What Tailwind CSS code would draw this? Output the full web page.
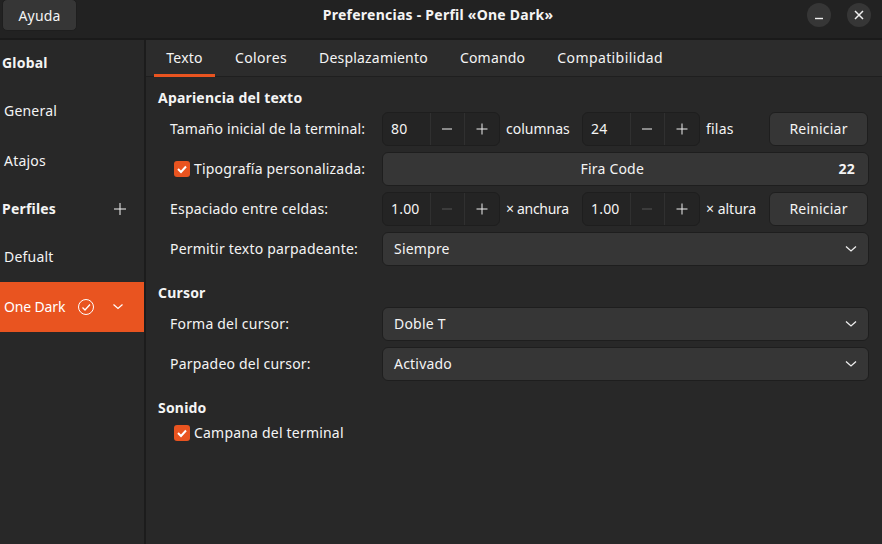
<!DOCTYPE html>
<html><head><meta charset="utf-8"><script src="https://cdn.jsdelivr.net/npm/@tailwindcss/browser@4"></script></head>
<body class="bg-[#282828]">
<div class="w-[882px] h-[544px] overflow-hidden flex flex-col bg-[#282828] text-[#f4f4f4] text-[14px] tracking-[0.2px] font-['Noto_Sans','Open_Sans',sans-serif]">
  <header class="h-[40px] shrink-0 relative flex items-center justify-between bg-[#222222] border-b-2 border-[#1a1a1a] pl-[2px] pr-[11px]">
    <button class="h-[32px] w-[75px] -mt-[8px] rounded-[5px] bg-[#363636] border border-[#1e1e1e] flex items-center justify-center text-[14px]">Ayuda</button>
    <div class="absolute left-0 right-0 top-[5px] pr-[6px] text-center font-bold text-[14px] leading-[20px] tracking-[0.25px]">Preferencias - Perfil «One Dark»</div>
    <div class="flex gap-[16px] -mt-[8px]">
      <div class="w-[24px] h-[24px] rounded-full bg-[#363636] flex items-center justify-center"><svg width="16" height="16" viewBox="0 0 16 16"><path d="M4 11.5h8" stroke="#f0f0f0" stroke-width="1.4"/></svg></div>
      <div class="w-[24px] h-[24px] rounded-full bg-[#363636] flex items-center justify-center"><svg width="16" height="16" viewBox="0 0 16 16"><path d="M4 4l8 8M12 4l-8 8" stroke="#f0f0f0" stroke-width="1.5"/></svg></div>
    </div>
  </header>
  <div class="flex flex-1 min-h-0">
    <aside class="w-[146px] shrink-0 border-r-2 border-[#1c1c1c] flex flex-col">
      <div class="h-[46px] flex items-center pl-[2px] pb-[2px] font-bold">Global</div>
      <div class="h-[50px] flex items-center pl-[4px] pb-[2px]">General</div>
      <div class="h-[50px] flex items-center pl-[4px] pb-[2px]">Atajos</div>
      <div class="h-[46px] flex items-center justify-between pl-[2px] pr-[18px] pb-[2px] font-bold">Perfiles
        <svg class="mt-[2px]" width="12" height="12" viewBox="0 0 12 12"><path d="M6 0v12M0 6h12" stroke="#f4f4f4" stroke-width="1"/></svg></div>
      <div class="h-[50px] flex items-center pl-[4px] pb-[2px]">Defualt</div>
      <div class="h-[50px] flex items-center pl-[4px] pb-[2px] bg-[#e95420] text-white"><span class="tracking-[-0.15px]">One Dark</span>
        <svg class="ml-[12px] mt-[1px]" width="18" height="18" viewBox="0 0 18 18" fill="none" stroke="#fff" stroke-width="1"><circle cx="9" cy="9" r="7.5"/><path d="M5.5 9.5l2.5 2.5 5-5.5" stroke-width="1.3"/></svg>
        <svg class="ml-[17px] mt-[1px]" width="12" height="8" viewBox="0 0 12 8" fill="none" stroke="#fff" stroke-width="1.2"><path d="M1.5 1.5L6 5.5l4.5-4"/></svg></div>
    </aside>
    <main class="flex-1 min-w-0 flex flex-col">
      <nav class="h-[37px] shrink-0 bg-[#2c2c2c] border-b border-[#1f1f1f] flex pl-[8px]">
        <div class="h-[37px] w-[61px] flex items-center justify-center border-b-[3px] border-[#e95420]">Texto</div>
        <div class="h-[36px] ml-[20px] pb-[1px] flex items-center tracking-[0.35px]">Colores</div>
        <div class="h-[36px] ml-[32px] pb-[1px] flex items-center">Desplazamiento</div>
        <div class="h-[36px] ml-[32px] pb-[1px] flex items-center">Comando</div>
        <div class="h-[36px] ml-[32px] pb-[1px] flex items-center tracking-[0.4px]">Compatibilidad</div>
      </nav>
      <div class="pl-[12px] pr-[13px] pt-[11px] flex flex-col">
        <h3 class="h-[20px] leading-[20px] font-bold">Apariencia del texto</h3>
        <div class="mt-[4px] flex flex-col gap-[6px]">
          <div class="h-[34px] flex items-center">
            <span class="w-[224px] pl-[12px] pb-[2px] shrink-0 tracking-[0.1px]">Tamaño inicial de la terminal:</span>
            <div class="w-[118px] h-[34px] rounded-[6px] border border-[#1e1e1e] bg-[#242424] flex items-center shrink-0">
              <span class="w-[47px] pl-[8px] pb-[2px]">80</span>
              <span class="w-[35px] h-full border-l border-[#303030] flex items-center justify-center"><svg width="12" height="12" viewBox="0 0 12 12"><path d="M1 6h10" stroke="#eee"/></svg></span>
              <span class="w-[35px] h-full border-l border-[#303030] flex items-center justify-center"><svg width="12" height="12" viewBox="0 0 12 12"><path d="M0.5 6h11M6 .5v11" stroke="#eee"/></svg></span>
            </div>
            <span class="w-[82px] pl-[6px] pb-[2px] shrink-0 tracking-normal">columnas</span>
            <div class="w-[118px] h-[34px] rounded-[6px] border border-[#1e1e1e] bg-[#242424] flex items-center shrink-0">
              <span class="w-[47px] pl-[8px] pb-[2px]">24</span>
              <span class="w-[35px] h-full border-l border-[#303030] flex items-center justify-center"><svg width="12" height="12" viewBox="0 0 12 12"><path d="M1 6h10" stroke="#eee"/></svg></span>
              <span class="w-[35px] h-full border-l border-[#303030] flex items-center justify-center"><svg width="12" height="12" viewBox="0 0 12 12"><path d="M0.5 6h11M6 .5v11" stroke="#eee"/></svg></span>
            </div>
            <span class="w-[69px] pl-[6px] pb-[2px] shrink-0">filas</span>
            <button class="w-[99px] h-[34px] rounded-[6px] border border-[#1e1e1e] bg-[#363636] text-center pb-[2px]">Reiniciar</button>
          </div>
          <div class="h-[34px] flex items-center">
            <label class="w-[224px] pl-[16px] shrink-0 flex items-center gap-[4px]">
              <span class="w-[16px] h-[16px] rounded-[3px] bg-[#e95420] flex items-center justify-center"><svg width="12" height="12" viewBox="0 0 12 12" fill="none" stroke="#fff" stroke-width="2"><path d="M2 6l3 3 5-5.5"/></svg></span><span class="pb-[2px]">Tipografía personalizada:</span></label>
            <button class="flex-1 h-[34px] rounded-[6px] border border-[#1e1e1e] bg-[#363636] flex items-center pl-[3px] pr-[13px] pb-[2px]"><span class="flex-1 text-center">Fira Code</span><span class="font-bold">22</span></button>
          </div>
          <div class="h-[34px] flex items-center">
            <span class="w-[224px] pl-[12px] pb-[2px] shrink-0">Espaciado entre celdas:</span>
            <div class="w-[118px] h-[34px] rounded-[6px] border border-[#1e1e1e] bg-[#242424] flex items-center shrink-0">
              <span class="w-[47px] pl-[8px] pb-[2px]">1.00</span>
              <span class="w-[35px] h-full border-l border-[#303030] flex items-center justify-center"><svg width="12" height="12" viewBox="0 0 12 12"><path d="M1 6h10" stroke="#555"/></svg></span>
              <span class="w-[35px] h-full border-l border-[#303030] flex items-center justify-center"><svg width="12" height="12" viewBox="0 0 12 12"><path d="M0.5 6h11M6 .5v11" stroke="#eee"/></svg></span>
            </div>
            <span class="w-[82px] pl-[6px] pb-[2px] shrink-0 tracking-[-0.3px]">× anchura</span>
            <div class="w-[118px] h-[34px] rounded-[6px] border border-[#1e1e1e] bg-[#242424] flex items-center shrink-0">
              <span class="w-[47px] pl-[8px] pb-[2px]">1.00</span>
              <span class="w-[35px] h-full border-l border-[#303030] flex items-center justify-center"><svg width="12" height="12" viewBox="0 0 12 12"><path d="M1 6h10" stroke="#555"/></svg></span>
              <span class="w-[35px] h-full border-l border-[#303030] flex items-center justify-center"><svg width="12" height="12" viewBox="0 0 12 12"><path d="M0.5 6h11M6 .5v11" stroke="#eee"/></svg></span>
            </div>
            <span class="w-[69px] pl-[6px] pb-[2px] shrink-0 tracking-normal">× altura</span>
            <button class="w-[99px] h-[34px] rounded-[6px] border border-[#1e1e1e] bg-[#363636] text-center pb-[2px]">Reiniciar</button>
          </div>
          <div class="h-[34px] flex items-center">
            <span class="w-[224px] pl-[12px] pb-[2px] shrink-0">Permitir texto parpadeante:</span>
            <div class="flex-1 h-[34px] rounded-[6px] border border-[#1e1e1e] bg-[#363636] flex items-center justify-between pl-[11px] pr-[11px]"><span class="pb-[2px]">Siempre</span><svg width="12" height="8" viewBox="0 0 12 8" fill="none" stroke="#eee" stroke-width="1.3"><path d="M1 1.5L6 6l5-4.5"/></svg></div>
          </div>
        </div>
        <h3 class="mt-[17px] h-[20px] leading-[20px] font-bold">Cursor</h3>
        <div class="mt-[4px] flex flex-col gap-[6px]">
          <div class="h-[34px] flex items-center">
            <span class="w-[224px] pl-[12px] pb-[2px] shrink-0">Forma del cursor:</span>
            <div class="flex-1 h-[34px] rounded-[6px] border border-[#1e1e1e] bg-[#363636] flex items-center justify-between pl-[11px] pr-[11px]"><span class="pb-[2px]">Doble T</span><svg width="12" height="8" viewBox="0 0 12 8" fill="none" stroke="#eee" stroke-width="1.3"><path d="M1 1.5L6 6l5-4.5"/></svg></div>
          </div>
          <div class="h-[34px] flex items-center">
            <span class="w-[224px] pl-[12px] pb-[2px] shrink-0">Parpadeo del cursor:</span>
            <div class="flex-1 h-[34px] rounded-[6px] border border-[#1e1e1e] bg-[#363636] flex items-center justify-between pl-[11px] pr-[11px]"><span class="pb-[2px]">Activado</span><svg width="12" height="8" viewBox="0 0 12 8" fill="none" stroke="#eee" stroke-width="1.3"><path d="M1 1.5L6 6l5-4.5"/></svg></div>
          </div>
        </div>
        <h3 class="mt-[17px] h-[20px] leading-[20px] font-bold">Sonido</h3>
        <label class="mt-[5px] h-[20px] pl-[16px] flex items-center gap-[4px]">
          <span class="w-[16px] h-[16px] rounded-[3px] bg-[#e95420] flex items-center justify-center"><svg width="12" height="12" viewBox="0 0 12 12" fill="none" stroke="#fff" stroke-width="2"><path d="M2 6l3 3 5-5.5"/></svg></span><span class="pb-[2px]">Campana del terminal</span></label>
      </div>
    </main>
  </div>
</div>
</body></html>
